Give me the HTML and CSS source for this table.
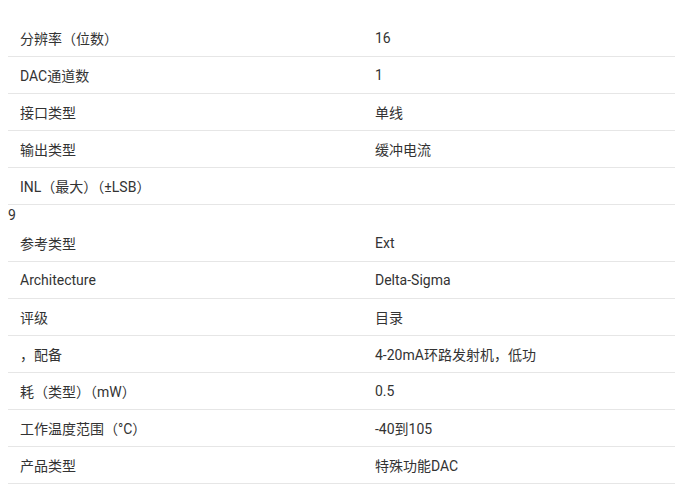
FILE: index.html
```html
<!DOCTYPE html>
<html lang="zh-CN">
<head>
<meta charset="utf-8">
<link rel="stylesheet" href="styles.css">
</head>
<body>
<div class="specs">
  <div class="row"><div class="label">分辨率（位数）</div><div class="value">16</div></div>
  <div class="row"><div class="label">DAC通道数</div><div class="value">1</div></div>
  <div class="row"><div class="label">接口类型</div><div class="value">单线</div></div>
  <div class="row"><div class="label">输出类型</div><div class="value">缓冲电流</div></div>
  <div class="row"><div class="label">INL（最大）（±LSB）</div><div class="value"></div></div>
  <div class="stray">9</div>
  <div class="row"><div class="label">参考类型</div><div class="value">Ext</div></div>
  <div class="row"><div class="label">Architecture</div><div class="value">Delta-Sigma</div></div>
  <div class="row"><div class="label">评级</div><div class="value">目录</div></div>
  <div class="row"><div class="label">，配备</div><div class="value">4-20mA环路发射机，低功</div></div>
  <div class="row"><div class="label">耗（类型）（mW）</div><div class="value">0.5</div></div>
  <div class="row"><div class="label">工作温度范围（°C）</div><div class="value">-40到105</div></div>
  <div class="row"><div class="label">产品类型</div><div class="value">特殊功能DAC</div></div>
</div>
</body>
</html>
```
FILE: styles.css
```css
html, body {
  margin: 0;
  padding: 0;
  background: #ffffff;
}
body {
  font-family: Roboto, "Noto Sans CJK SC", sans-serif;
  font-size: 14px;
  color: #333333;
}
.specs {
  padding: 20px 3px 0 8px;
}
.row {
  display: grid;
  grid-template-columns: 355px 1fr;
  align-items: center;
  height: 36px;
  border-bottom: 1px solid #e6e6e6;
}
.label {
  padding-left: 12px;
}
.value {
  padding-left: 12px;
}
.stray {
  height: 20px;
  line-height: 20px;
}
```
